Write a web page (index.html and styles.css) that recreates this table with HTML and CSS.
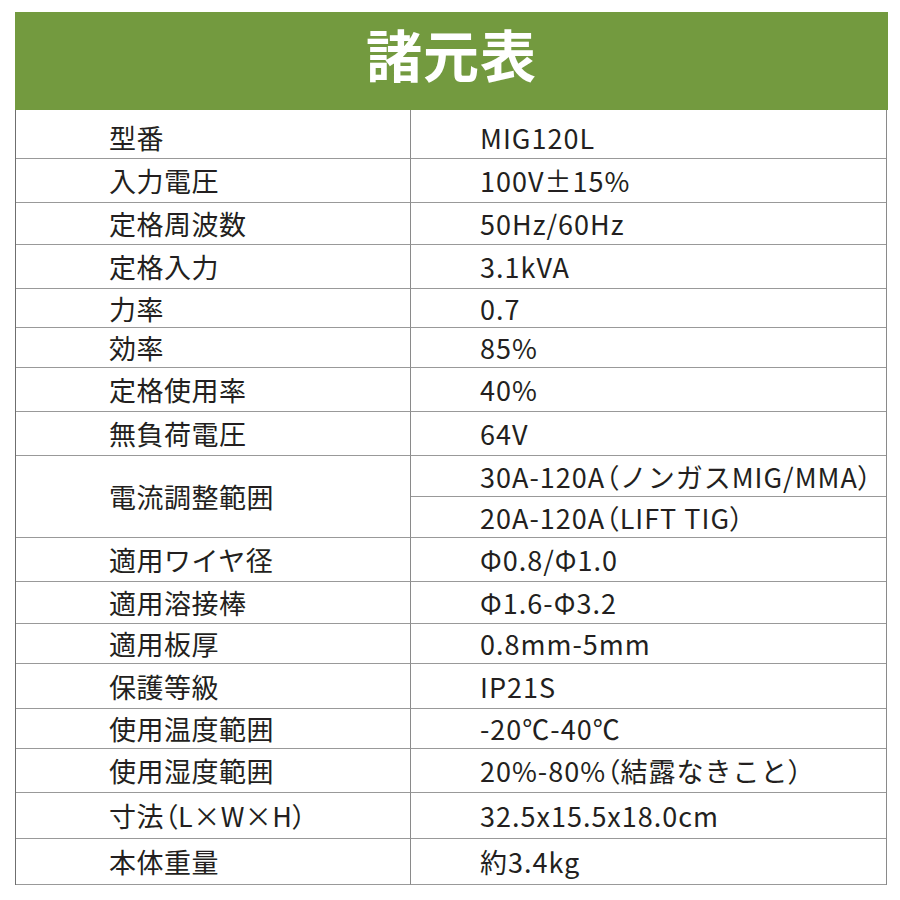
FILE: index.html
```html
<!DOCTYPE html>
<html lang="ja">
<head>
<meta charset="utf-8">
<title>諸元表</title>
<link rel="stylesheet" href="styles.css">
</head>
<body>
<div class="sheet">
  <div class="title">諸元表</div>
  <div class="spec">
    <div class="k first">型番</div><div class="v first">MIG120L</div>
    <div class="k">入力電圧</div><div class="v">100V±15%</div>
    <div class="k">定格周波数</div><div class="v">50Hz/60Hz</div>
    <div class="k">定格入力</div><div class="v">3.1kVA</div>
    <div class="k">力率</div><div class="v">0.7</div>
    <div class="k">効率</div><div class="v">85%</div>
    <div class="k">定格使用率</div><div class="v">40%</div>
    <div class="k">無負荷電圧</div><div class="v">64V</div>
    <div class="k span2">電流調整範囲</div><div class="v">30A-120A<span class="p">（</span>ノンガスMIG/MMA<span class="p">）</span></div>
    <div class="v">20A-120A<span class="p">（</span>LIFT TIG<span class="p">）</span></div>
    <div class="k">適用ワイヤ径</div><div class="v">Φ0.8/Φ1.0</div>
    <div class="k">適用溶接棒</div><div class="v">Φ1.6-Φ3.2</div>
    <div class="k">適用板厚</div><div class="v">0.8mm-5mm</div>
    <div class="k">保護等級</div><div class="v">IP21S</div>
    <div class="k">使用温度範囲</div><div class="v">-20℃-40℃</div>
    <div class="k">使用湿度範囲</div><div class="v">20%-80%<span class="p">（</span>結露なきこと<span class="p">）</span></div>
    <div class="k">寸法<span class="p">（</span>L×W×H<span class="p">）</span></div><div class="v">32.5x15.5x18.0cm</div>
    <div class="k">本体重量</div><div class="v">約3.4kg</div>
  </div>
</div>
</body>
</html>
```

FILE: styles.css
```css
html, body {
  margin: 0;
  padding: 0;
  background: #ffffff;
}
body {
  font-family: "Noto Sans CJK JP", "Noto Sans", sans-serif;
  color: #231f20;
}
.sheet {
  margin: 12px 0 0 15px;
  width: 873px;
}
.title {
  height: 98px;
  background: #739a3f;
  color: #ffffff;
  font-weight: 700;
  font-size: 56px;
  line-height: 1;
  display: flex;
  align-items: center;
  justify-content: center;
  padding-bottom: 16px;
  box-sizing: border-box;
  letter-spacing: 1px;
}
.spec {
  width: 872px;
  box-sizing: border-box;
  border-left: 1px solid #6f6f6f;
  border-right: 1px solid #8a8a8a;
  display: grid;
  grid-template-columns: 395px 1fr;
  grid-template-rows: 49px 44px 42px 44px 39px 40px 44px 44px 41px 41px 44px 42px 40px 45px 40px 44px 46px 46px;
}
.k, .v {
  border-bottom: 1px solid #999999;
  box-sizing: border-box;
  display: flex;
  align-items: center;
  font-size: 27px;
  letter-spacing: 1px;
  line-height: 1;
  white-space: pre;
}
.k {
  padding-left: 93px;
  border-right: 1px solid #8a8a8a;
  letter-spacing: 0.5px;
}
.v {
  padding-left: 69px;
}
.p {
  font-feature-settings: "palt";
}
.first {
  padding-top: 6px;
}
.span2 {
  grid-row: span 2;
}
```
